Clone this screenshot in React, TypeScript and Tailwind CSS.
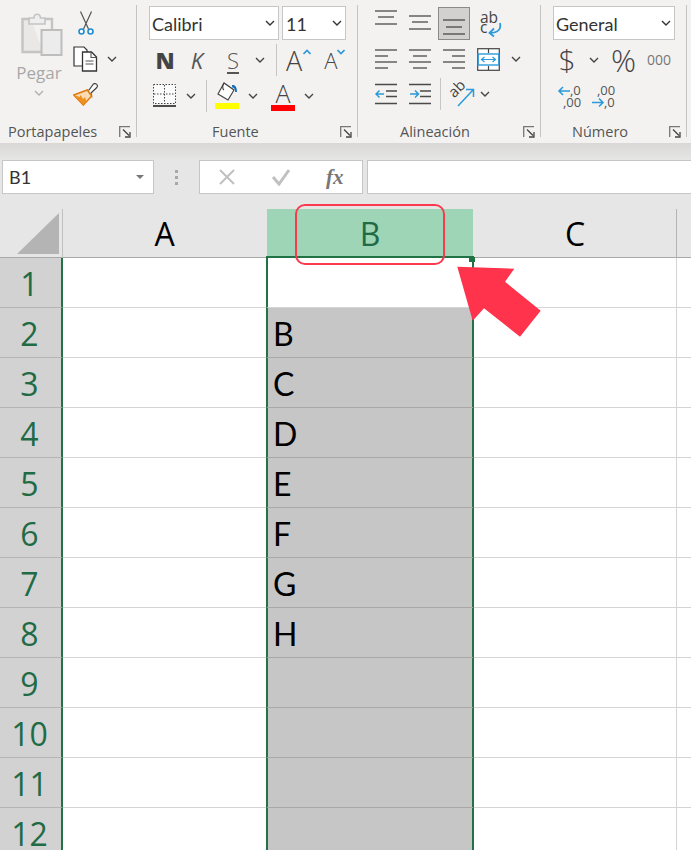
import type { ReactNode } from 'react';

// Excel ribbon + sheet, column B selected

const UI = "font-['Open_Sans',sans-serif]";
const BLUE = '#2b9ad8';

function Chev({ className = '', color = '#444444' }: { className?: string; color?: string }) {
  return (
    <svg width="10" height="6" viewBox="0 0 10 6" className={`shrink-0 ${className}`}>
      <path d="M1 1l4 4 4-4" fill="none" stroke={color} strokeWidth="1.4" />
    </svg>
  );
}

function Launcher() {
  return (
    <svg width="12" height="12" viewBox="0 0 12 12" className="shrink-0">
      <path d="M.7 11V.7H11" fill="none" stroke="#777" strokeWidth="1.3" />
      <path d="M4 3.5l6 6M11 6v5H6" fill="none" stroke="#444" strokeWidth="1.3" />
    </svg>
  );
}

function Group({ label, className, labelClass, children }: { label: string; className: string; labelClass: string; children: ReactNode }) {
  return (
    <section className={`flex shrink-0 ${className}`}>
      <div className="flex min-w-0 flex-1 flex-col">
        <div className="h-[120px]">{children}</div>
        <div className="flex h-[23px] items-center">
          <span className={`mt-[2px] text-[14.5px] leading-none text-[#555] ${labelClass}`}>{label}</span>
          <span className="mr-[5px] ml-auto flex">
            <Launcher />
          </span>
        </div>
      </div>
      <div className="mt-[5px] mb-[6px] w-px bg-[#c4c4c4]" />
    </section>
  );
}

function Lines({ rows, className = '' }: { rows: [number, number, number][]; className?: string }) {
  return (
    <svg width="22" height="24" viewBox="0 0 22 24" className={`shrink-0 ${className}`}>
      {rows.map(([a, b, y]) => (
        <line key={`${a}-${y}`} x1={a} x2={b} y1={y} y2={y} stroke="#4a4a4a" strokeWidth="1.3" />
      ))}
    </svg>
  );
}

function Combo({ text, className }: { text: string; className: string }) {
  return (
    <div className={`flex h-[34px] items-center justify-between border border-[#c6c6c6] bg-white ${className}`}>
      <span className="mt-[2px] font-['Lato',sans-serif] text-[18px] leading-none text-[#333]">{text}</span>
      <Chev color="#333" />
    </div>
  );
}

function PasteIcon() {
  return (
    <svg width="42" height="46" viewBox="0 0 42 46" className="block">
      <path d="M10 7H1.5v33H22" fill="#e9e8e7" stroke="#c4c4c4" strokeWidth="2.4" />
      <path d="M24 7h7v11" fill="none" stroke="#c4c4c4" strokeWidth="2.4" />
      <path d="M8 12V6h5c0-5 6-5 6.500 0H24v6z" fill="#eeeeee" stroke="#c4c4c4" strokeWidth="1.6" />
      <rect x="20.500" y="18" width="20" height="25" fill="#ececec" stroke="#bdbdbd" strokeWidth="2" />
    </svg>
  );
}

function ScissorsIcon() {
  return (
    <svg width="16" height="24" viewBox="0 0 16 24" className="block">
      <path d="M2.500 .5L10.500 18M13.500 .5L5.500 18" fill="none" stroke="#555" strokeWidth="1.2" />
      <circle cx="3.500" cy="20.500" r="2.500" fill="#fff" stroke="#1e8bcd" strokeWidth="1.600" />
      <circle cx="12.500" cy="20.500" r="2.500" fill="#fff" stroke="#1e8bcd" strokeWidth="1.600" />
    </svg>
  );
}

function CopyIcon() {
  return (
    <svg width="25" height="26" viewBox="0 0 25 26" className="block">
      <path d="M10 20H1V1h10l3 3v2" fill="#fff" stroke="#333" strokeWidth="1.200" />
      <path d="M9.500 6h9l5 5v14h-14z" fill="#fff" stroke="#333" strokeWidth="1.300" />
      <path d="M18 6v5.500h5.500M12.500 15h8M12.500 18h8" fill="none" stroke="#555" strokeWidth="1.100" />
    </svg>
  );
}

function BrushIcon() {
  return (
    <svg width="25" height="23" viewBox="0 0 25 23" className="block">
      <path d="M13.500 7.500L16 7l4.500-6c1-.8 2.500-.5 3.300.5s.8 2 0 3L18 10l.5 3z" fill="#fff" stroke="#444" strokeWidth="1.200" />
      <path d="M.8 12l13.500-5 4.400 6-8.400 9z" fill="#f9dcb6" stroke="#e07a0b" strokeWidth="1.500" />
      <path d="M.8 12l6 2 .8-2 2.500 4 2-2 1 4-2.800 4z" fill="#ee8f1f" />
    </svg>
  );
}

function BorderIcon() {
  return (
    <svg width="24" height="24" viewBox="0 0 24 24" className="block">
      <path d="M.5 .5h22v19H.5zM11.500 1v18M1 10h21" fill="#fbfbfb" stroke="#444" strokeWidth="1" strokeDasharray="1.500 1.500" />
      <line x1="0" x2="23" y1="22" y2="22" stroke="#222" strokeWidth="1.600" />
    </svg>
  );
}

function FillIcon() {
  return (
    <svg width="24" height="30" viewBox="0 0 24 30" className="block">
      <path d="M9 2L3 13l10 6 6-10z" fill="#fff" stroke="#444" strokeWidth="1.200" />
      <path d="M9 2c-2 3-1.500 6 0 7" fill="none" stroke="#444" strokeWidth="1.200" />
      <path d="M17 4c3-.5 5 2 5 7h-1.800c0-3-1-4.500-3-4.500z" fill="#0f6cbd" />
      <rect x="0" y="22" width="24" height="6" fill="#ffff00" />
    </svg>
  );
}

function WrapIcon() {
  return (
    <svg width="26" height="30" viewBox="0 0 26 30" className="mt-[3px] block overflow-visible">
      <text x="1" y="13" fontSize="15.500" fill="#444" fontFamily="Open Sans">ab</text>
      <text x="1" y="23" fontSize="15.500" fill="#444" fontFamily="Open Sans">c</text>
      <path d="M21 13c1.500 6-2 10-10 10" fill="none" stroke={BLUE} strokeWidth="1.800" />
      <path d="M15 18.500L10.500 23l4.500 3.500" fill="none" stroke={BLUE} strokeWidth="1.800" />
    </svg>
  );
}

function MergeIcon() {
  return (
    <svg width="23" height="23" viewBox="0 0 23 23" className="block">
      <rect x=".7" y=".7" width="21.600" height="21.600" fill="#fff" stroke="#444" strokeWidth="1.200" />
      <path d="M11.500 1v4M11.500 18v4" stroke="#444" strokeWidth="1.200" />
      <rect x="1.200" y="6" width="20.600" height="11" fill="#fff" stroke={BLUE} strokeWidth="1.400" />
      <path d="M5 11.500h13M7.500 9l-3 2.500 3 2.500M15.500 9l3 2.500-3 2.500" fill="none" stroke={BLUE} strokeWidth="1.200" />
    </svg>
  );
}

function IndentIcon({ flip }: { flip?: boolean }) {
  return (
    <svg width="22" height="22" viewBox="0 0 22 22" className="block">
      <path d="M0 1.500h22M11 8h11M11 13.500h11M0 20.500h22" stroke="#4a4a4a" strokeWidth="1.300" />
      <path
        d={flip ? 'M1 11h8M6 7.500l3.500 3.500L6 14.500' : 'M9 11H1M4.500 7.500L1 11l3.500 3.500'}
        fill="none"
        stroke={BLUE}
        strokeWidth="1.500"
      />
    </svg>
  );
}

function OrientIcon() {
  return (
    <svg width="26" height="28" viewBox="0 0 26 28" className="block overflow-visible">
      <text x="0" y="14" fontSize="15" fill="#444" fontFamily="Open Sans" transform="rotate(-45 8 10)">ab</text>
      <path d="M9 26L24 10M17 9.500h7.500V17" fill="none" stroke={BLUE} strokeWidth="1.500" />
    </svg>
  );
}

function DecimalIcon({ up }: { up?: boolean }) {
  return (
    <svg width="25" height="26" viewBox="0 0 25 26" className="block overflow-visible">
      <g fontSize="13" fill="#555" fontFamily="Open Sans">
        {up ? (
          <>
            <text x="6" y="11">,00</text>
            <text x="13" y="23">,0</text>
            <path d="M1 18.500h11M8 14.500l4 4-4 4" fill="none" stroke={BLUE} strokeWidth="1.600" />
          </>
        ) : (
          <>
            <text x="13" y="11">,0</text>
            <text x="6" y="23">,00</text>
            <path d="M13 7H2M6 3L2 7l4 4" fill="none" stroke={BLUE} strokeWidth="1.600" />
          </>
        )}
      </g>
    </svg>
  );
}

function Ribbon() {
  return (
    <div className={`flex h-[143px] bg-[#f3f2f1] ${UI}`}>
      <Group label="Portapapeles" className="w-[137px]" labelClass="pl-[8px]">
        <div className="flex pl-[17px]">
          <div className="flex w-[44px] flex-col items-center pt-[12px]">
            <span className="ml-[6px]"><PasteIcon /></span>
            <span className="mt-[3px] text-[17px] leading-[24px] text-[#a8a8a8]">Pegar</span>
            <Chev className="mt-[5px]" color="#b0b0b0" />
          </div>
          <div className="ml-[12px] flex flex-col items-start">
            <span className="mt-[11px] ml-[5px]"><ScissorsIcon /></span>
            <span className="mt-[11px] flex items-center">
              <CopyIcon />
              <Chev className="ml-[9px]" />
            </span>
            <span className="mt-[11px]"><BrushIcon /></span>
          </div>
        </div>
      </Group>

      <Group label="Fuente" className="w-[221px]" labelClass="pl-[75px]">
        <div className="flex flex-col pt-[6px] pl-[12px]">
          <div className="flex gap-[3px]">
            <Combo text="Calibri" className="w-[130px] pr-[3px] pl-[2px]" />
            <Combo text="11" className="w-[64px] pr-[3px] pl-[3px]" />
          </div>
          <div className="mt-[4px] flex h-[32px] items-center">
            <span className="w-[32px] text-center text-[23px] font-extrabold text-[#444]">N</span>
            <span className="w-[32px] text-center text-[22px] text-[#555] italic">K</span>
            <span className="ml-[4px] w-[32px] text-center text-[22px] font-light text-[#555] underline underline-offset-[3px]">S</span>
            <Chev className="ml-[6px]" />
            <span className="ml-[11px] h-[32px] w-px bg-[#c6c6c6]" />
            <span className="ml-[9px] text-[27px] leading-none font-light text-[#444]">A</span>
            <svg width="8" height="6" viewBox="0 0 8 6" className="mb-[16px] ml-[1px]">
              <path d="M.5 5L4 1.500 7.500 5" fill="none" stroke={BLUE} strokeWidth="1.600" />
            </svg>
            <span className="ml-[13px] text-[22px] leading-none font-light text-[#444]">A</span>
            <svg width="8" height="6" viewBox="0 0 8 6" className="mb-[16px]">
              <path d="M.5 1L4 4.500 7.500 1" fill="none" stroke={BLUE} strokeWidth="1.600" />
            </svg>
          </div>
          <div className="mt-[4px] flex h-[32px] items-center">
            <span className="ml-[4px]"><BorderIcon /></span>
            <Chev className="ml-[9px]" />
            <span className="ml-[10px] h-[32px] w-px bg-[#c6c6c6]" />
            <span className="ml-[8px]"><FillIcon /></span>
            <Chev className="ml-[9px]" />
            <span className="ml-[13px] flex w-[24px] flex-col items-center">
              <span className="text-[25px] leading-[24px] font-light text-[#444]">A</span>
              <span className="h-[6px] w-[24px] bg-[#ff0000]" />
            </span>
            <Chev className="ml-[9px]" />
          </div>
        </div>
      </Group>

      <Group label="Alineación" className="w-[183px]" labelClass="pl-[42px]">
        <div className="flex flex-col pt-[7px] pl-[17px]">
          <div className="flex h-[33px] items-start">
            <Lines rows={[[0, 22, 4], [3, 19, 10], [0, 22, 17]]} />
            <Lines rows={[[0, 22, 9], [3, 19, 15], [0, 22, 22]]} className="ml-[12px]" />
            <span className="ml-[7px] flex h-[33px] w-[32px] items-center justify-center border border-[#8a8a8a] bg-[#d2d1d0]">
              <Lines rows={[[0, 22, 7], [3, 19, 14], [0, 22, 21]]} className="mt-[3px]" />
            </span>
            <span className="ml-[9px]"><WrapIcon /></span>
          </div>
          <div className="mt-[5px] flex h-[28px] items-center">
            <Lines rows={[[0, 22, 3], [0, 13, 9], [0, 22, 15], [0, 13, 21]]} />
            <Lines rows={[[0, 22, 3], [4, 18, 9], [0, 22, 15], [4, 18, 21]]} className="ml-[12px]" />
            <Lines rows={[[0, 22, 3], [9, 22, 9], [0, 22, 15], [9, 22, 21]]} className="ml-[12px]" />
            <span className="ml-[12px]"><MergeIcon /></span>
            <Chev className="ml-[11px]" />
          </div>
          <div className="mt-[5px] flex h-[32px] items-center">
            <IndentIcon />
            <span className="ml-[12px]"><IndentIcon flip /></span>
            <span className="ml-[9px] h-[32px] w-px bg-[#c6c6c6]" />
            <span className="ml-[8px]"><OrientIcon /></span>
            <Chev className="ml-[5px]" />
          </div>
        </div>
      </Group>

      <Group label="Número" className="w-[146px]" labelClass="pl-[31px]">
        <div className="flex flex-col pt-[6px] pl-[12px]">
          <Combo text="General" className="w-[122px] pr-[3px] pl-[2px]" />
          <div className="mt-[4px] flex h-[32px] items-center">
            <span className="ml-[3px] w-[22px] text-center text-[30px] leading-none font-light text-[#444]">$</span>
            <Chev className="ml-[11px]" />
            <span className="ml-[12px] text-[31px] leading-none font-light text-[#444]">%</span>
            <span className="ml-[11px] text-[14px] leading-none text-[#777]">000</span>
          </div>
          <div className="mt-[6px] flex h-[30px] items-center">
            <span className="ml-[4px]"><DecimalIcon /></span>
            <span className="ml-[9px]"><DecimalIcon up /></span>
          </div>
        </div>
      </Group>
    </div>
  );
}

function FormulaBar() {
  return (
    <div className={`flex h-[49px] items-start pl-[2px] ${UI}`}>
      <div className="flex h-[34px] w-[152px] items-center justify-between border border-[#c6c6c6] bg-white pr-[9px] pl-[6px]">
        <span className="font-['Lato',sans-serif] text-[18px] leading-none text-[#333]">B1</span>
        <span className="h-0 w-0 border-x-[4px] border-t-[4px] border-x-transparent border-t-[#777]" />
      </div>
      <div className="flex h-[34px] w-[45px] flex-col items-center justify-center gap-[3px]">
        <span className="size-[3px] bg-[#a8a8a8]" />
        <span className="size-[3px] bg-[#a8a8a8]" />
        <span className="size-[3px] bg-[#a8a8a8]" />
      </div>
      <div className="flex h-[34px] w-[164px] items-center border border-[#c6c6c6] bg-white">
        <svg width="18" height="18" viewBox="0 0 18 18" className="ml-[18px]">
          <path d="M2 2l14 14M16 2L2 16" stroke="#c0c0c0" strokeWidth="2" />
        </svg>
        <svg width="20" height="18" viewBox="0 0 20 18" className="ml-[35px]">
          <path d="M2 9l6 7L18 2" fill="none" stroke="#c0c0c0" strokeWidth="3" />
        </svg>
        <span className="ml-[35px] font-['Liberation_Serif',serif] text-[21px] leading-none font-bold text-[#777] italic">fx</span>
      </div>
      <div className="ml-[4px] h-[34px] flex-1 border border-r-0 border-[#c6c6c6] bg-white" />
    </div>
  );
}

const cellLetters = ['', 'B', 'C', 'D', 'E', 'F', 'G', 'H', '', '', '', ''];

function Sheet() {
  return (
    <div className={`grid grid-cols-[63px_203px_208px_203px_14px] ${UI}`}>
      <div className="flex h-[49px] items-end justify-end border-r border-b border-r-[#c0c0c0] border-b-[#a8a8a8] pr-[3px] pb-[3px]">
        <svg width="42" height="41" viewBox="0 0 42 41" className="block">
          <path d="M0 41L42 0v41z" fill="#b4b4b4" />
        </svg>
      </div>
      <div className="flex h-[49px] items-center justify-center border-b border-b-[#a8a8a8] pt-[2px] text-[32px] text-black">A</div>
      <div className="flex h-[49px] items-end border-b-2 border-[#217346]">
        <div className="mx-px flex h-[47px] flex-1 items-center justify-center bg-[#9fd5b7] pt-[2px] text-[32px] text-[#1f6b45]">B</div>
      </div>
      <div className="flex h-[49px] items-center justify-center border-r border-b border-r-[#b4b4b4] border-b-[#a8a8a8] pt-[2px] text-[32px] text-black">C</div>
      <div className="h-[49px] border-b border-b-[#a8a8a8]" />
      {cellLetters.map((letter, i) => (
        <Row key={i} n={i + 1} letter={letter} />
      ))}
    </div>
  );
}

function Row({ n, letter }: { n: number; letter: string }) {
  const active = n === 1;
  return (
    <>
      <div className="flex h-[50px] items-center justify-center border-r-2 border-b border-r-[#217346] border-b-[#b4b4b4] bg-[#d2d2d2] pt-[2px] pr-[2px] text-[32px] leading-none text-[#1f6b45]">
        {n}
      </div>
      <div className="h-[50px] border-b border-[#d4d4d4] bg-white" />
      <div
        className={`flex h-[50px] items-center border-x-2 border-x-[#217346] pt-[2px] pl-[5px] font-['Lato',sans-serif] text-[32px] leading-none text-black ${
          active ? 'border-b border-b-[#d4d4d4] bg-white' : 'border-b border-b-[#a8a8a8] bg-[#c6c6c6]'
        }`}
      >
        {letter}
      </div>
      <div className="h-[50px] border-r border-b border-[#d4d4d4] bg-white" />
      <div className="h-[50px] border-b border-[#d4d4d4] bg-white" />
    </>
  );
}

export default function App() {
  return (
    <div className="relative h-[850px] w-[691px] overflow-hidden bg-[#e6e6e6]">
      <Ribbon />
      <div className="h-[17px] bg-gradient-to-b from-[#d9d8d6] to-[#e6e6e6]" />
      <FormulaBar />
      <Sheet />

      {/* fill handle */}
      <div className="absolute top-[257px] left-[469px] h-[5px] w-[6px] bg-[#217346]" />

      {/* annotation: red outline + arrow */}
      <div className="absolute top-[204px] left-[295px] h-[61px] w-[150px] rounded-[10px] border-2 border-[#fb3a50]" />
      <svg width="691" height="850" viewBox="0 0 691 850" className="pointer-events-none absolute top-0 left-0">
        <path d="M457.300 266.700L514.300 268.700 505 281.700 540.700 310.700 520 336.700 484 308.300 472.700 320.700z" fill="#ff334b" />
      </svg>
    </div>
  );
}
